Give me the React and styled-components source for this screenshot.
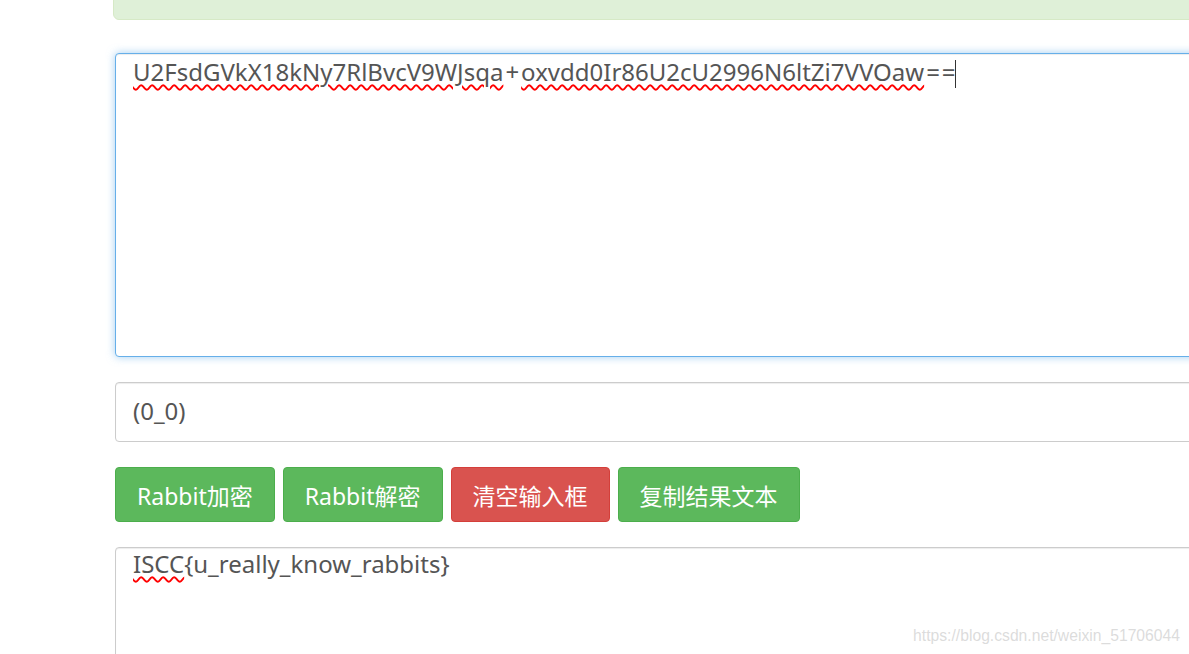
import React from "react";
import styled, { createGlobalStyle } from "styled-components";

const GlobalStyle = createGlobalStyle`
  html, body {
    margin: 0;
    padding: 0;
    background: #fff;
    overflow: hidden;
  }
  body {
    font-family: "Noto Sans", "Noto Sans CJK SC", sans-serif;
    color: #555;
  }
`;

const Page = styled.div`
  position: relative;
  width: 1189px;
  height: 654px;
  overflow: hidden;
`;

const Column = styled.div`
  margin-left: 113px;
  width: 1120px;
  display: flex;
  flex-direction: column;
`;

const Alert = styled.div`
  height: 58px;
  margin-top: -40px;
  margin-bottom: 33px;
  background: #dff0d8;
  border: 1px solid #d6e9c6;
  border-radius: 6px;
`;

const Field = styled.div`
  box-sizing: border-box;
  margin-left: 2px;
  height: ${(p) => p.$height}px;
  padding: ${(p) => p.$padTop}px 17px 0;
  font-size: 24px;
  line-height: 30px;
  color: #555;
  background: #fff;
  border: 1px solid ${(p) => (p.$focus ? "#66afe9" : "#ccc")};
  border-radius: 4px;
  box-shadow: ${(p) =>
    p.$focus
      ? "inset 0 1px 1px rgba(0,0,0,.075), 0 0 8px rgba(102,175,233,.6)"
      : "inset 0 1px 1px rgba(0,0,0,.075)"};
  white-space: nowrap;
  overflow: hidden;
  margin-bottom: 25px;
`;

const Typo = styled.span`
  text-decoration: underline wavy #f00;
  text-decoration-thickness: 1.5px;
  text-underline-offset: 3px;
`;

const Sign = styled.span`
  margin: 0 ${(p) => (p.$spread ? -p.$spread - 1 : 2)}px 0 2px;
  letter-spacing: ${(p) => p.$spread || 0}px;
`;

const Caret = styled.span`
  display: inline-block;
  width: 1px;
  height: 28px;
  background: #333;
  vertical-align: -7px;
`;

const Buttons = styled.div`
  display: flex;
  gap: 8px;
  margin-left: 2px;
  margin-bottom: 25px;
`;

const Button = styled.button`
  height: 55px;
  padding: 0 21px;
  font-family: "Noto Sans", "Noto Sans CJK SC", sans-serif;
  font-size: 23px;
  color: #fff;
  border-radius: 4px;
  cursor: pointer;
  background: ${(p) => (p.$danger ? "#d9534f" : "#5cb85c")};
  border: 1px solid ${(p) => (p.$danger ? "#d43f3a" : "#4cae4c")};
`;

const Watermark = styled.div`
  position: absolute;
  right: 9px;
  bottom: 9px;
  font-family: "Liberation Sans", Arial, sans-serif;
  font-size: 15.7px;
  color: rgba(190, 190, 190, 0.55);
`;

export default function App() {
  return (
    <Page>
      <GlobalStyle />
      <Column>
        <Alert />
        <Field $focus $height={304} $padTop={3}>
          <Typo>U2FsdGVkX18kNy7RlBvcV9WJsqa</Typo>
          <Sign>+</Sign>
          <Typo>oxvdd0Ir86U2cU2996N6ltZi7VVOaw</Typo>
          <Sign $spread={2}>==</Sign>
          <Caret />
        </Field>
        <Field $height={60} $padTop={13}>
          (0_0)
        </Field>
        <Buttons>
          <Button>Rabbit加密</Button>
          <Button>Rabbit解密</Button>
          <Button $danger>清空输入框</Button>
          <Button>复制结果文本</Button>
        </Buttons>
        <Field $height={140} $padTop={1}>
          <Typo>ISCC</Typo>
          {"{u_really_know_rabbits}"}
        </Field>
      </Column>
      <Watermark>https://blog.csdn.net/weixin_51706044</Watermark>
    </Page>
  );
}
